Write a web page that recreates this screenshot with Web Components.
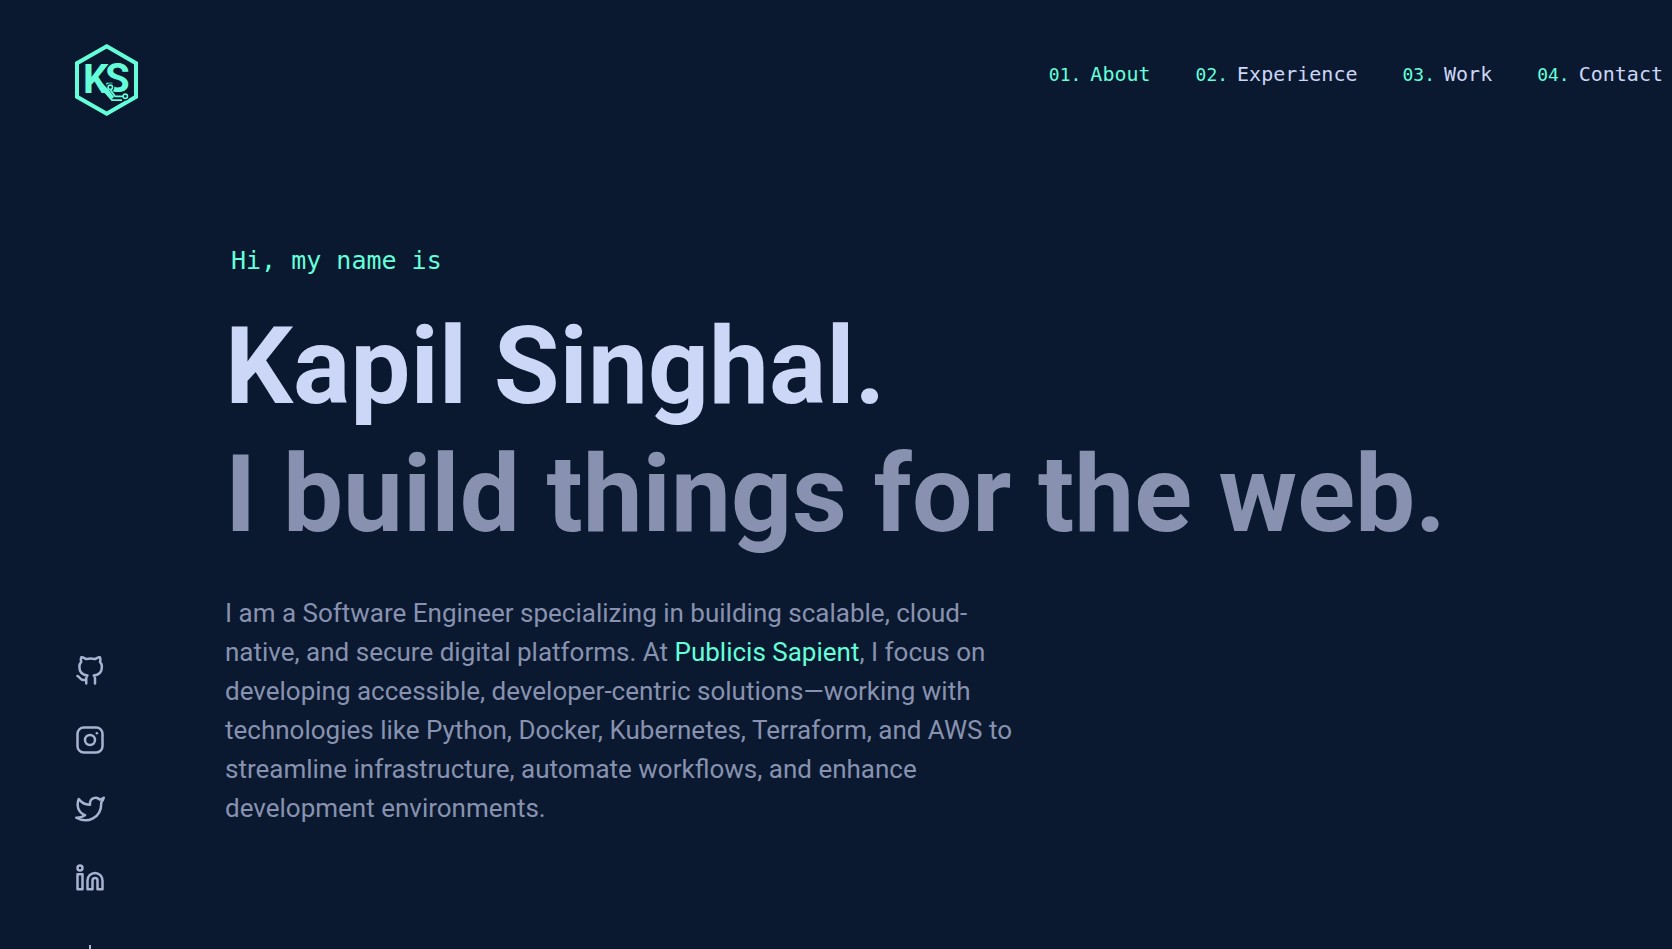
<!DOCTYPE html>
<html lang="en">
<head>
<meta charset="utf-8">
<title>Kapil Singhal</title>
<style>
  :root {
    --navy: #0a192f;
    --green: #64ffda;
    --slate: #8892b0;
    --light-slate: #a8b2d1;
    --lightest-slate: #ccd6f6;
    --sans: Roboto, sans-serif;
    --mono: "DejaVu Sans Mono", monospace;
  }
  html { background: var(--navy); }
  body { margin: 0; background: var(--navy); color: var(--slate); font-family: var(--sans); overflow: hidden; }
</style>
</head>
<body>
<portfolio-page>
  <site-header slot="header">
    <site-logo slot="logo"></site-logo>
    <nav-link number="01." href="#about" active>About</nav-link>
    <nav-link number="02." href="#experience">Experience</nav-link>
    <nav-link number="03." href="#work">Work</nav-link>
    <nav-link number="04." href="#contact">Contact</nav-link>
  </site-header>
  <social-rail slot="rail">
    <social-link icon="github" label="GitHub" href="#github"></social-link>
    <social-link icon="instagram" label="Instagram" href="#instagram"></social-link>
    <social-link icon="twitter" label="Twitter" href="#twitter"></social-link>
    <social-link icon="linkedin" label="LinkedIn" href="#linkedin"></social-link>
  </social-rail>
  <hero-section>
    <span slot="greeting">Hi, my name is</span>
    <span slot="name">Kapil Singhal.</span>
    <span slot="tagline">I build things for the web.</span>
    I am a Software Engineer specializing in building scalable, cloud-native, and secure digital platforms. At <a href="#publicis">Publicis Sapient</a>, I focus on developing accessible, developer-centric solutions—working with technologies like Python, Docker, Kubernetes, Terraform, and AWS to streamline infrastructure, automate workflows, and enhance development environments.
  </hero-section>
</portfolio-page>

<script>
  class BaseElement extends HTMLElement {
    connectedCallback() {
      if (this.shadowRoot) return;
      this.attachShadow({ mode: 'open' }).innerHTML = this.render();
    }
  }

  customElements.define('portfolio-page', class extends BaseElement {
    render() {
      return `
        <style>
          :host { display: grid; grid-template-columns: 225px minmax(0, 1fr); grid-template-rows: auto 1fr; min-height: 100vh; }
          .header { grid-column: 1 / -1; }
          .rail { align-self: end; }
        </style>
        <div class="header"><slot name="header"></slot></div>
        <div class="rail"><slot name="rail"></slot></div>
        <main><slot></slot></main>`;
    }
  });

  customElements.define('site-header', class extends BaseElement {
    render() {
      return `
        <style>
          :host { display: block; }
          header { display: flex; justify-content: space-between; align-items: flex-start; padding: 44px 9px 44px 75px; }
          nav { display: flex; gap: 45px; padding-top: 14px; }
        </style>
        <header>
          <slot name="logo"></slot>
          <nav aria-label="Main"><slot></slot></nav>
        </header>`;
    }
  });

  customElements.define('site-logo', class extends BaseElement {
    render() {
      return `
        <style>
          :host { display: block; }
          a { display: block; }
          svg { display: block; }
          text { font: 700 40px var(--sans); fill: var(--green); }
        </style>
        <a href="#top" aria-label="Home">
          <svg width="64" height="72" viewBox="0 0 64 72" fill="none" stroke="#64ffda">
            <path d="M31.7 2.3 61 19.2v33.6L31.7 69.7 2 52.8V19.2z" stroke-width="4"/>
            <g stroke="none"><text x="8" y="49">K</text><text x="30" y="48">S</text></g>
            <circle cx="35.3" cy="43.300" r="4" fill="#0a192f" stroke="none"/>
            <path d="M36 45.500L39.500 50H47v6.500H33z" fill="#0a192f" stroke="none"/>
            <circle cx="50.300" cy="52.300" r="4.200" fill="#0a192f" stroke="none"/>
            <path d="M24 36l10 10 5 7-2 2-7-6z" fill="#64ffda" stroke="none"/>
            <path d="M35.500 46l4.500 6.300h8" stroke-width="1.800"/>
            <path d="M29 47l8 9.200h10" stroke-width="1.800"/>
            <circle cx="35.300" cy="43.300" r="2.200" fill="#0a192f" stroke-width="1.600"/>
            <circle cx="50.300" cy="52.300" r="2.200" fill="#0a192f" stroke-width="1.600"/>
          </svg>
        </a>`;
    }
  });

  customElements.define('nav-link', class extends BaseElement {
    render() {
      return `
        <style>
          :host { display: block; }
          a { display: flex; align-items: baseline; gap: 9px; font: 20px/32px var(--mono); color: var(--lightest-slate); text-decoration: none; white-space: nowrap; }
          :host([active]) a, .number { color: var(--green); }
          .number { font-size: 18px; }
        </style>
        <a href="${this.getAttribute('href')}"><span class="number">${this.getAttribute('number')}</span><span><slot></slot></span></a>`;
    }
  });

  customElements.define('social-rail', class extends BaseElement {
    render() {
      return `
        <style>
          :host { display: block; }
          .rail { display: flex; flex-direction: column; gap: 39px; width: 30px; margin-left: 75px; }
          .rail::after { content: ""; width: 2px; height: 4px; margin: 13px auto 0; background: var(--light-slate); }
        </style>
        <div class="rail"><slot></slot></div>`;
    }
  });

  const ICONS = {
    github: '<path d="M9 19c-5 1.500-5-2.500-7-3m14 6v-3.870a3.370 3.370 0 0 0-.940-2.610c3.140-.350 6.440-1.540 6.440-7A5.440 5.440 0 0 0 20 4.770 5.070 5.070 0 0 0 19.910 1S18.730.650 16 2.480a13.380 13.380 0 0 0-7 0C6.270.650 5.090 1 5.090 1A5.070 5.070 0 0 0 5 4.770a5.440 5.440 0 0 0-1.500 3.780c0 5.420 3.300 6.610 6.440 7A3.370 3.370 0 0 0 9 18.130V22"/>',
    instagram: '<rect x="2" y="2" width="20" height="20" rx="5"/><circle cx="12" cy="12" r="4"/><path d="M17.500 6.500h.010"/>',
    twitter: '<path d="M23 3a10.900 10.900 0 0 1-3.140 1.530 4.480 4.480 0 0 0-7.860 3v1A10.660 10.660 0 0 1 3 4s-4 9 5 13a11.640 11.640 0 0 1-7 2c9 5 20 0 20-11.500a4.500 4.500 0 0 0-.080-.830A7.720 7.720 0 0 0 23 3z"/>',
    linkedin: '<path d="M16 8a6 6 0 0 1 6 6v7h-4v-7a2 2 0 0 0-2-2 2 2 0 0 0-2 2v7h-4v-7a6 6 0 0 1 6-6z"/><path d="M2 9h4v12H2z"/><circle cx="4" cy="4" r="2"/>'
  };

  customElements.define('social-link', class extends BaseElement {
    render() {
      return `
        <style>
          :host { display: block; }
          a { display: block; color: var(--light-slate); }
          svg { display: block; width: 30px; height: 30px; }
        </style>
        <a href="${this.getAttribute('href')}" aria-label="${this.getAttribute('label')}">
          <svg viewBox="0 0 24 24" fill="none" stroke="currentColor" stroke-width="2" stroke-linecap="round" stroke-linejoin="round">${ICONS[this.getAttribute('icon')]}</svg>
        </a>`;
    }
  });

  customElements.define('hero-section', class extends BaseElement {
    render() {
      return `
        <style>
          :host { display: block; padding-top: 85px; }
          h1, h2, p { margin: 0; font-weight: 400; }
          .greeting { margin: 0 0 26px 6px; font: 25px/32px var(--mono); color: var(--green); }
          .big { font-size: 107px; line-height: 128px; font-weight: 700; }
          h1 { color: var(--lightest-slate); }
          h2 { color: var(--slate); }
          .bio { max-width: 800px; margin-top: 35px; font-size: 26px; line-height: 39px; }
          ::slotted(a) { color: var(--green); text-decoration: none; }
        </style>
        <p class="greeting"><slot name="greeting"></slot></p>
        <h1 class="big"><slot name="name"></slot></h1>
        <h2 class="big"><slot name="tagline"></slot></h2>
        <p class="bio"><slot></slot></p>`;
    }
  });
</script>
</body>
</html>
